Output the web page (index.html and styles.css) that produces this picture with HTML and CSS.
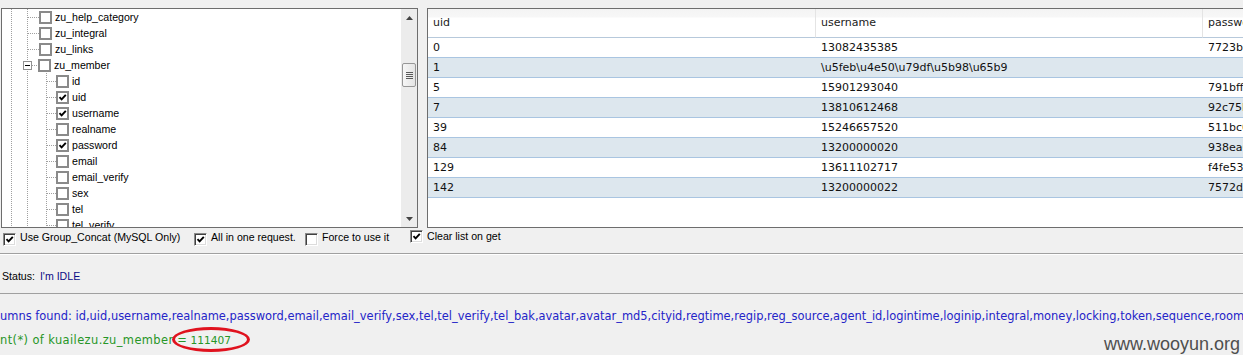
FILE: index.html
```html
<!DOCTYPE html>
<html lang="en">
<head>
    <meta charset="UTF-8">
    <meta name="viewport" content="width=device-width, initial-scale=1.0">
    <title>Column dump</title>
    <link rel="stylesheet" href="styles.css">
</head>
<body>
    <div class="app">
        <div class="panes">
            <div class="tree-box">
                <div class="tree">
                    <div class="node l1"><span class="stub"></span><span class="tcb"></span><span class="name">zu_help_category</span></div>
                    <div class="node l1"><span class="stub"></span><span class="tcb"></span><span class="name">zu_integral</span></div>
                    <div class="node l1"><span class="stub"></span><span class="tcb"></span><span class="name">zu_links</span></div>
                    <div class="node l1 open"><span class="expander"></span><span class="stub short"></span><span class="tcb"></span><span class="name">zu_member</span></div>
                    <div class="children">
                        <div class="node l2"><span class="stub"></span><span class="tcb"></span><span class="name">id</span></div>
                        <div class="node l2"><span class="stub"></span><span class="tcb checked"><svg viewBox="0 0 9 9"><polyline points="1.5,4.2 3.6,6.4 7.8,1.8"/></svg></span><span class="name">uid</span></div>
                        <div class="node l2"><span class="stub"></span><span class="tcb checked"><svg viewBox="0 0 9 9"><polyline points="1.5,4.2 3.6,6.4 7.8,1.8"/></svg></span><span class="name">username</span></div>
                        <div class="node l2"><span class="stub"></span><span class="tcb"></span><span class="name">realname</span></div>
                        <div class="node l2"><span class="stub"></span><span class="tcb checked"><svg viewBox="0 0 9 9"><polyline points="1.5,4.2 3.6,6.4 7.8,1.8"/></svg></span><span class="name">password</span></div>
                        <div class="node l2"><span class="stub"></span><span class="tcb"></span><span class="name">email</span></div>
                        <div class="node l2"><span class="stub"></span><span class="tcb"></span><span class="name">email_verify</span></div>
                        <div class="node l2"><span class="stub"></span><span class="tcb"></span><span class="name">sex</span></div>
                        <div class="node l2"><span class="stub"></span><span class="tcb"></span><span class="name">tel</span></div>
                        <div class="node l2"><span class="stub"></span><span class="tcb"></span><span class="name">tel_verify</span></div>
                    </div>
                </div>
                <div class="vscroll">
                    <span class="arrow"><svg viewBox="0 0 7 4"><polygon points="0,4 3.5,0 7,4"/></svg></span>
                    <span class="track"><span class="thumb"><span class="grip"></span></span></span>
                    <span class="arrow"><svg viewBox="0 0 7 4"><polygon points="0,0 7,0 3.5,4"/></svg></span>
                </div>
            </div>

            <div class="grid-box">
                <table class="grid">
                    <colgroup>
                        <col class="c-uid">
                        <col class="c-user">
                        <col class="c-pass">
                    </colgroup>
                    <thead>
                        <tr><th>uid</th><th>username</th><th>password</th></tr>
                    </thead>
                    <tbody>
                        <tr><td>0</td><td>13082435385</td><td>7723b4</td></tr>
                        <tr><td>1</td><td>\u5feb\u4e50\u79df\u5b98\u65b9</td><td></td></tr>
                        <tr><td>5</td><td>15901293040</td><td>791bff</td></tr>
                        <tr><td>7</td><td>13810612468</td><td>92c75b</td></tr>
                        <tr><td>39</td><td>15246657520</td><td>511bc0</td></tr>
                        <tr><td>84</td><td>13200000020</td><td>938ea0</td></tr>
                        <tr><td>129</td><td>13611102717</td><td>f4fe53</td></tr>
                        <tr><td>142</td><td>13200000022</td><td>7572d</td></tr>
                    </tbody>
                </table>
            </div>
        </div>

        <div class="options">
            <label class="opt o1"><span class="cb"><svg viewBox="0 0 9 9"><polyline points="1.5,4.2 3.6,6.4 7.8,1.8"/></svg></span><span>Use Group_Concat (MySQL Only)</span></label>
            <label class="opt o2"><span class="cb"><svg viewBox="0 0 9 9"><polyline points="1.5,4.2 3.6,6.4 7.8,1.8"/></svg></span><span>All in one request.</span></label>
            <label class="opt o3"><span class="cb"></span><span>Force to use it</span></label>
            <label class="opt o4"><span class="cb"><svg viewBox="0 0 9 9"><polyline points="1.5,4.2 3.6,6.4 7.8,1.8"/></svg></span><span>Clear list on get</span></label>
        </div>

        <div class="status">Status: <span class="idle">I'm IDLE</span></div>

        <div class="log">
            <div class="log-line cols">umns found: id,uid,username,realname,password,email,email_verify,sex,tel,tel_verify,tel_bak,avatar,avatar_md5,cityid,regtime,regip,reg_source,agent_id,logintime,loginip,integral,money,locking,token,sequence,room_id</div>
            <div class="log-line count"><span class="wide">nt(*) of kuailezu.zu_member</span> <span class="hl">= <span class="num">111407</span></span></div>
        </div>

        <div class="watermark">www.wooyun.org</div>
    </div>
</body>
</html>
```

FILE: styles.css
```css
:root {
    --face: #f0f0f0;
    --frame: #6d6d6d;
    --dots: #a0a0a0;
    --row-alt: #dde7ee;
    --row-line: #a9c5e1;
}

* {
    margin: 0;
    padding: 0;
    box-sizing: border-box;
}

body {
    background: var(--face);
    font-family: "Liberation Sans", Arial, sans-serif;
    font-size: 10.6px;
    color: #000;
}

.app {
    position: relative;
    width: 1243px;
    height: 355px;
    overflow: hidden;
}

/* top panes */
.panes {
    display: flex;
    gap: 9px;
    padding: 8px 0 0 1px;
    height: 228px;
}

.tree-box {
    display: flex;
    flex: 0 0 417px;
    height: 220px;
    border: 1px solid var(--frame);
    background: #fff;
    overflow: hidden;
}

.tree {
    flex: 1;
    overflow: hidden;
    background-image:
        linear-gradient(var(--dots) 50%, transparent 50%),
        linear-gradient(var(--dots) 50%, transparent 50%);
    background-size: 1px 2px;
    background-position: 9px 0, 25px 0;
    background-repeat: repeat-y;
}

.children {
    background: linear-gradient(var(--dots) 50%, transparent 50%) 44px 0 / 1px 2px repeat-y;
}

.node {
    display: flex;
    align-items: center;
    height: 16px;
    white-space: nowrap;
}

.node.l1 {
    padding-left: 26px;
}

.node.l1.open {
    padding-left: 21px;
}

.node.l2 {
    padding-left: 45px;
}

.stub {
    width: 11px;
    height: 1px;
    background: linear-gradient(to right, var(--dots) 50%, transparent 50%) 0 0 / 2px 1px repeat-x;
}

.node.l2 .stub {
    width: 9px;
}

.stub.short {
    width: 6px;
}

.expander {
    width: 9px;
    height: 9px;
    border: 1px solid #919191;
    background: #fff linear-gradient(#000, #000) center / 5px 1px no-repeat;
}

.tcb {
    display: flex;
    width: 13px;
    height: 13px;
    border: 2px solid #8a8a8a;
    background: #fff;
}

.tcb svg,
.cb svg {
    width: 9px;
    height: 9px;
}

.tcb polyline,
.cb polyline {
    fill: none;
    stroke: #000;
    stroke-width: 1.9;
}

.name {
    margin-left: 3px;
    line-height: 16px;
}

.vscroll {
    display: flex;
    flex-direction: column;
    width: 16px;
    background: #ececec;
}

.arrow {
    display: flex;
    align-items: center;
    justify-content: center;
    height: 17px;
}

.arrow svg {
    width: 7px;
    height: 4px;
    fill: #444;
}

.track {
    flex: 1;
    padding: 37px 1px 0;
}

.thumb {
    display: flex;
    align-items: center;
    justify-content: center;
    height: 24px;
    border: 1px solid #979797;
    border-radius: 2px;
    background: linear-gradient(to right, #f6f6f6, #e4e4e4);
}

.grip {
    width: 7px;
    height: 7px;
    background: repeating-linear-gradient(#5a5a5a 0 1px, transparent 1px 2px);
}

.grid-box {
    flex: 0 0 840px;
    height: 220px;
    border: 1px solid var(--frame);
    background: #fff;
    overflow: hidden;
}

.grid {
    table-layout: fixed;
    width: 900px;
    border-collapse: separate;
    border-spacing: 0;
    font-family: "DejaVu Sans", Verdana, sans-serif;
    font-size: 11px;
    color: #111;
}

.c-uid,
.c-user {
    width: 387px;
}

.grid th {
    height: 29px;
    padding: 0 5px 1px;
    text-align: left;
    font-weight: normal;
    color: #1b1b1b;
    background: linear-gradient(#f4f4f4 0, #f7f7f7 8px, #fff 9px);
    border-bottom: 1px solid #b7c9db;
    white-space: nowrap;
}

.grid th + th {
    border-left: 1px solid #e4e4e4;
}

.grid td {
    height: 20px;
    padding: 0 5px;
    border-bottom: 1px solid var(--row-line);
    white-space: nowrap;
    overflow: hidden;
}

.grid td + td {
    padding-left: 6px;
}

.grid tbody tr:nth-child(even) td {
    background: var(--row-alt);
}

/* option checkboxes */
.options {
    display: flex;
    height: 25px;
    padding: 5px 0 0 3px;
}

.opt {
    display: flex;
    align-items: flex-start;
    gap: 4px;
    white-space: nowrap;
}

.opt span:last-child {
    margin-top: -2px;
    line-height: 13px;
}

.o1 { width: 191px; }
.o2 { width: 111px; }
.o3 { width: 105px; }

.o4 {
    margin-top: -3px;
}

.o4 span:last-child {
    margin-top: 0;
}

.cb {
    display: flex;
    align-items: center;
    justify-content: center;
    width: 13px;
    height: 13px;
    background: #fff;
    border: 1px solid;
    border-color: #8a8a8a #fff #fff #8a8a8a;
    box-shadow: inset 1px 1px 0 #404040, inset -1px -1px 0 #dcdcdc;
}

.status {
    height: 41px;
    padding: 14px 0 0 2px;
    line-height: 16px;
    border-top: 1px solid #a0a0a0;
    border-bottom: 1px solid #a0a0a0;
    box-shadow: inset 0 1px 0 #fff;
}

.idle {
    margin-left: 2px;
    color: #0b0b86;
}

/* log output */
.log {
    padding-top: 10px;
    font-family: "DejaVu Sans", Verdana, sans-serif;
    font-size: 11.45px;
    line-height: 24px;
    white-space: nowrap;
}

.cols {
    color: #2424c8;
}

.count {
    color: #279627;
}

.wide {
    letter-spacing: 0.4px;
}

.num {
    font-size: 10.6px;
}

.hl {
    position: relative;
}

.hl::after {
    content: "";
    position: absolute;
    left: -5px;
    right: -19px;
    top: -6px;
    bottom: -5px;
    border: 3px solid #e0121e;
    border-radius: 50%;
}

.watermark {
    position: absolute;
    right: 3px;
    top: 334px;
    font-family: "Liberation Sans", Arial, sans-serif;
    font-size: 18px;
    line-height: 20px;
    color: #4e4e4e;
}
```
